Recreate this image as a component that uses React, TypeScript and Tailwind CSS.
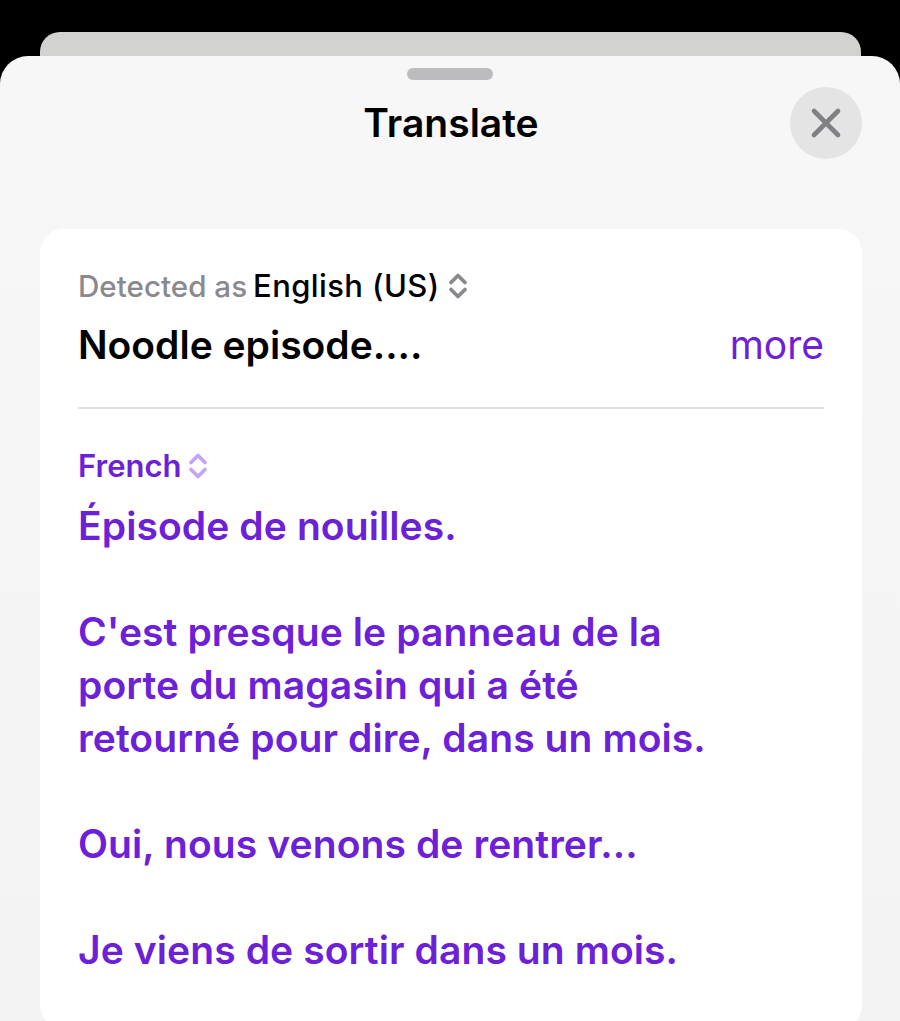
const Chevrons = ({ className }: { className: string }) => (
  <svg viewBox="0 0 20 28" className={className} fill="none" stroke="currentColor" strokeWidth="3.8" strokeLinecap="round" strokeLinejoin="round">
    <path d="M3 10.5 10 3.5l7 7" />
    <path d="M3 17.5 10 24.5l7-7" />
  </svg>
);

const paragraphs = [
  ["Épisode de nouilles."],
  ["C'est presque le panneau de la", "porte du magasin qui a été", "retourné pour dire, dans un mois."],
  ["Oui, nous venons de rentrer..."],
  ["Je viens de sortir dans un mois."],
];

export default function App() {
  return (
    <div className="h-[1021px] w-[900px] overflow-hidden bg-black pt-[32px] font-['Inter',sans-serif]">
      <div className="ml-[40px] h-[24px] w-[821px] rounded-t-[20px] bg-[#d2d3d0]" />
      <div className="h-[965px] rounded-t-[28px] bg-linear-to-b from-[#f7f7f7] to-[#f3f3f3] pt-[12px]">
        <div className="mx-auto h-[12px] w-[86px] rounded-full bg-[#bcbcbe]" />
        <div className="mt-[7px] grid grid-cols-[72px_1fr_72px] items-center pl-[40px] pr-[38px]">
          <div />
          <h1 className="text-center text-[39px] font-semibold text-black">Translate</h1>
          <div className="flex h-[72px] w-[72px] items-center justify-center rounded-full bg-[#e4e4e5]">
            <svg viewBox="0 0 32 32" className="h-[32px] w-[32px]" fill="none" stroke="#7f7f84" strokeWidth="4.6" strokeLinecap="round">
              <path d="M4 4l24 24M28 4 4 28" />
            </svg>
          </div>
        </div>
        <div className="ml-[40px] mr-[38px] mt-[70px] h-[800px] rounded-[24px] bg-white pl-[38px] pr-[38px] pt-[38px]">
          <div className="flex h-[38px] items-center font-medium">
            <span className="mr-[6px] text-[29.6px] text-[#8a8a8e]">Detected as</span>
            <span className="text-[31px] tracking-[0.4px] text-black">English (US)</span>
            <Chevrons className="ml-[8px] h-[28px] w-[20px] text-[#8a8a8e]" />
          </div>
          <div className="mt-[17px] flex h-[46px] items-center justify-between text-[39px]">
            <span className="font-semibold text-black">Noodle episode....</span>
            <span className="text-[#6c20d8]">more</span>
          </div>
          <div className="mt-[39px] h-[2px] bg-[#dfdfe0]" />
          <div className="mt-[38px] flex h-[38px] items-center text-[31px] font-semibold text-[#6c20d8]">
            <span>French</span>
            <Chevrons className="ml-[7px] h-[28px] w-[20px] text-[#c6a4f2]" />
          </div>
          <div className="mt-[14px] text-[39px] font-semibold leading-[53px] tracking-[0.1px] text-[#6c20d8]">
            {paragraphs.map((lines) => (
              <p key={lines[0]} className="mb-[53px]">
                {lines.map((line) => (
                  <span key={line} className="block whitespace-nowrap">{line}</span>
                ))}
              </p>
            ))}
          </div>
        </div>
      </div>
    </div>
  );
}
